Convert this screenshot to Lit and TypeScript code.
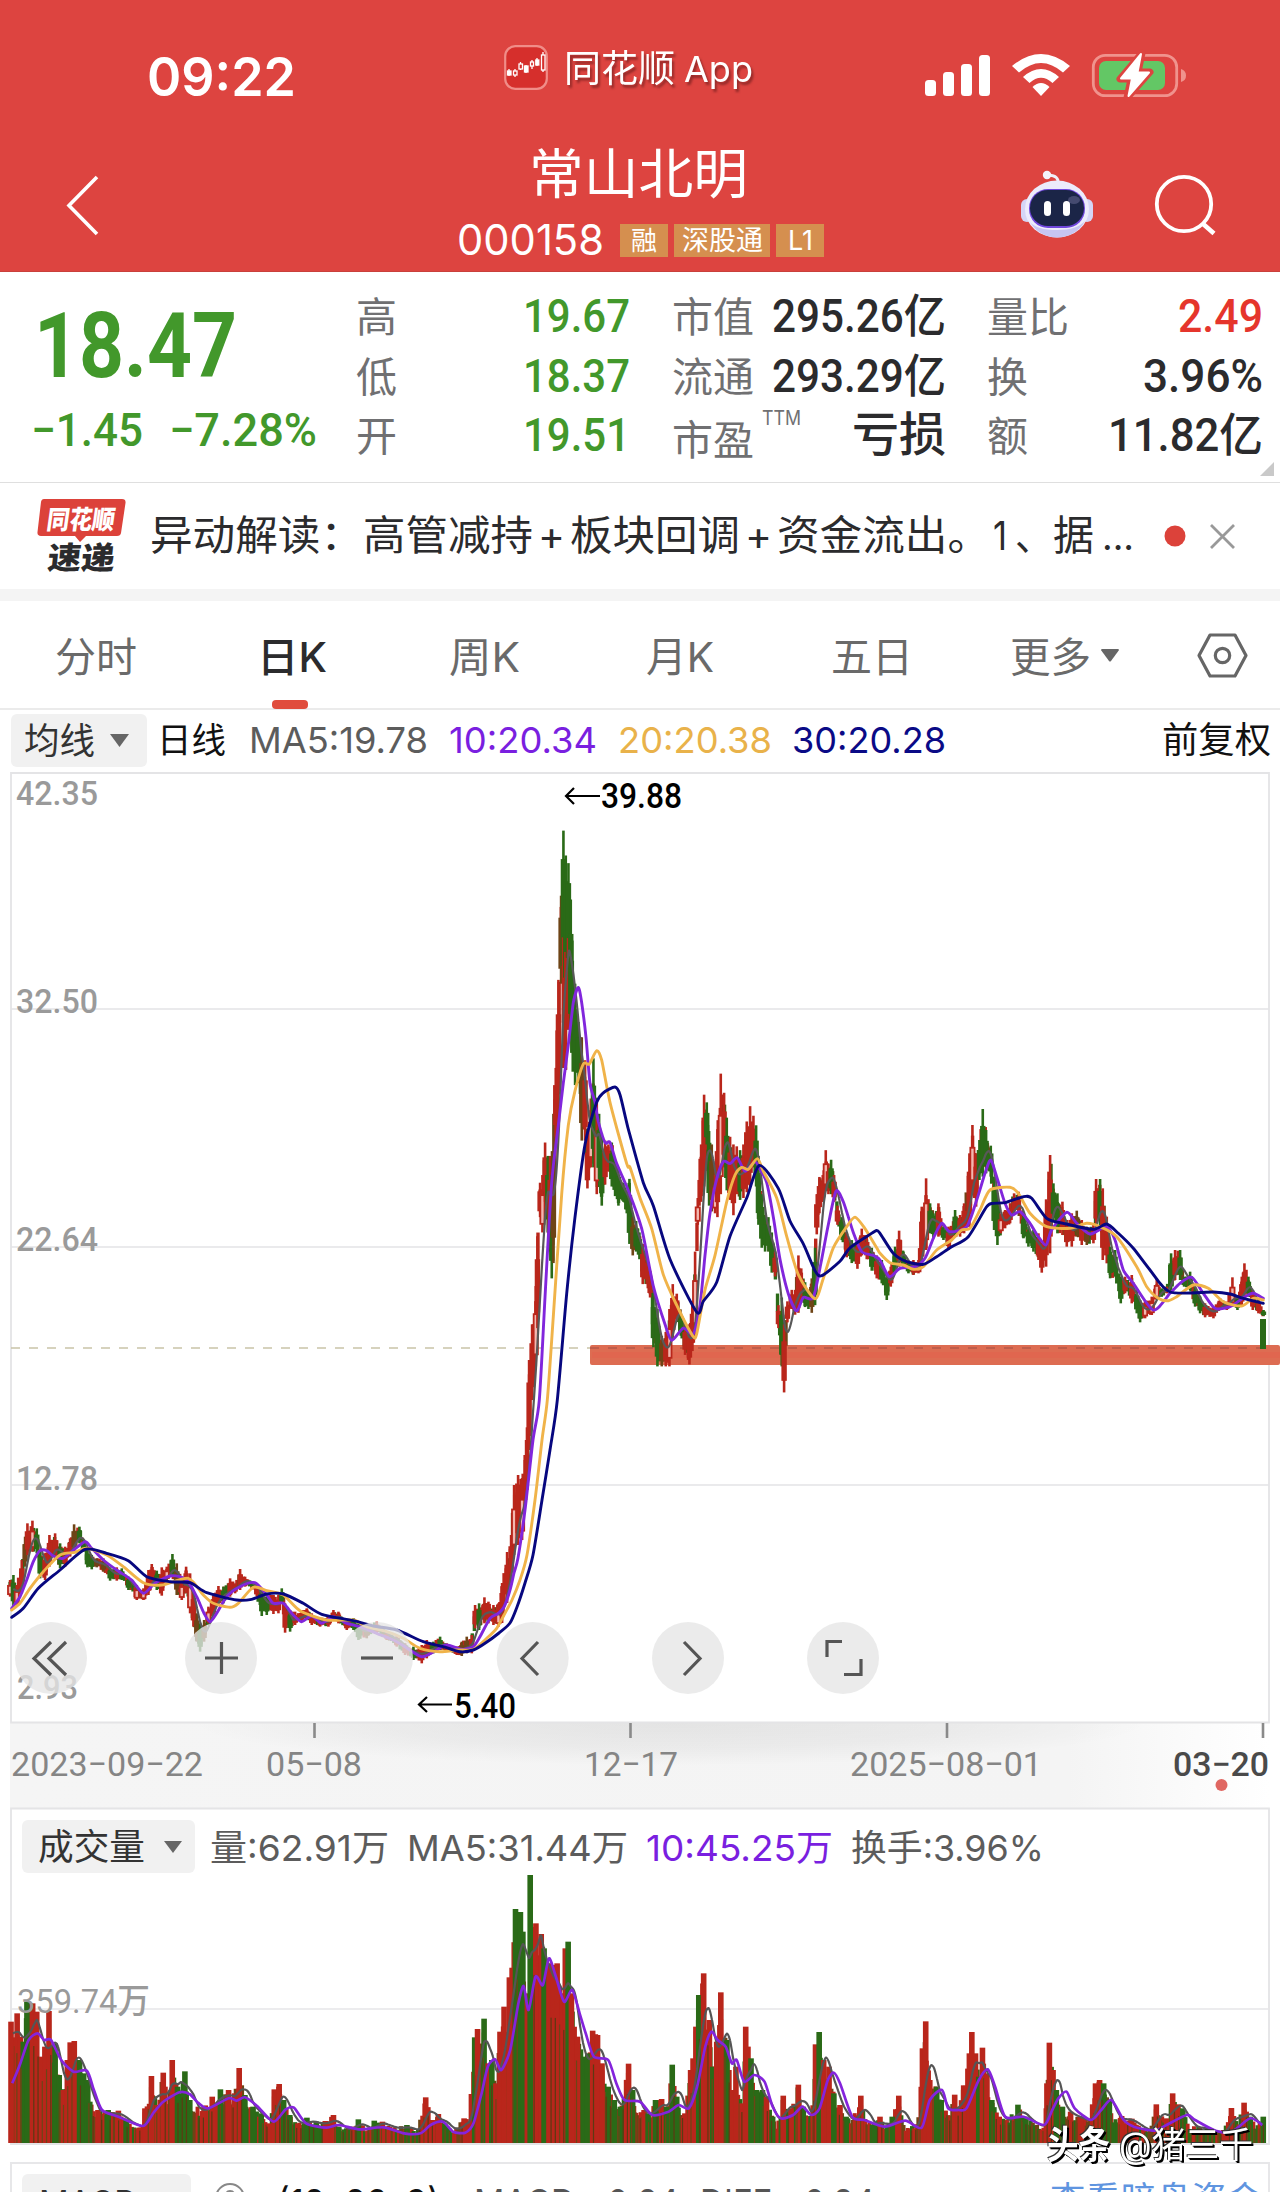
import { LitElement, html, svg, css } from "lit";
import { customElement } from "lit/decorators.js";

type Pt = [number, number];
type Bar = { x: number; top: number; bottom: number };

const RED = "#b9261b";
const GREEN = "#2a6a17";
const BROWN = "#6e4416";

/** Deterministic noise, so that the bars look the same on every render. */
const noise = (i: number): number => {
  const s = Math.sin(i * 127.1 + 11.7) * 43758.5453;
  return s - Math.floor(s);
};

/** "u:v u:v" pairs mapped with an origin and a scale. */
const line = (x0: number, sx: number, y0: number, sy: number, d: string): Pt[] =>
  d.trim().split(/\s+/).map((p) => {
    const [u, v] = p.split(":").map(Number);
    return [x0 + u / sx, y0 + v / sy] as Pt;
  });

const range = (x0: number, sx: number, y0: number, sy: number, d: string): Bar[] =>
  d.trim().split(/\s+/).map((p) => {
    const [u, v] = p.split(":");
    const [a, b] = v.split(",").map(Number);
    return { x: x0 + Number(u) / sx, top: y0 + a / sy, bottom: y0 + b / sy };
  });

const A = [0, 3, 1480, 3] as const;
const B = [500, 3, 800, 2.613] as const;
const C = [880, 3, 1080, 3] as const;
const V1 = [0, 2.45, 1860, 3] as const;
const V2 = [640, 2.45, 1860, 3] as const;

const PRICE: Bar[] = [
  ...range(...A, `30:300,350 40:285,380 50:315,375 65:240,340 75:170,260 82:130,225 97:122,215 110:145,220 120:210,295 135:220,300 148:165,260 165:160,240
  180:190,265 195:200,260 210:175,230 222:133,215 238:140,190 250:180,215 262:210,262 275:225,268 290:235,262 310:235,275 330:262,302
  350:262,302 365:265,300 385:290,330 410:315,360 430:325,360 445:270,345 455:252,320 470:272,330 485:262,347 500:260,300 517:222,290
  530:250,345 545:300,360 558:260,340 570:280,400 580:330,440 590:400,485 600:430,515 612:420,485 625:380,430 640:340,410 655:318,370
  670:320,370 690:295,350 705:310,340 720:267,330 735:290,320 755:305,320 770:310,350 785:325,408 800:340,405 820:345,402 835:345,400
  845:325,370 855:370,458 870:390,455 885:395,435 905:390,425 920:385,420 935:400,435 960:415,440 985:405,440 1000:390,420 1015:395,430
  1040:420,450 1060:415,450 1075:430,480 1100:430,475 1130:425,460 1160:455,480 1190:465,500 1215:490,525 1240:500,540 1265:495,550
  1280:480,535 1300:485,520 1320:470,510 1340:490,510 1370:500,525 1385:485,528 1400:470,520 1415:465,520 1425:375,445 1437:370,450
  1453:352,430 1465:365,430 1480:375,435 1495:370,440`),
  ...range(0, 1, 0, 1, `502:1583,1623 507:1552,1603 511:1535,1580 514:1485,1555 518:1475,1545 522:1478,1540 526:1440,1500 529:1360,1450`),
  ...range(...B, `96:1370,1568 107:1270,1480 112:1140,1380 120:1000,1090 127:980,1130 135:895,1050 143:930,1130 150:930,1180 155:980,1250 160:820,1210
  167:700,880 175:470,830 183:250,480 190:80,700 197:145,705 205:165,600 212:260,620 218:420,710 225:480,745 235:580,740 245:620,890
  255:680,890 262:890,1015 272:780,960 280:675,960 290:790,1030 297:820,990 305:870,1060 315:890,1005 325:900,970 335:895,1010
  345:940,1035 355:960,1060 370:1000,1050 380:1020,1080 388:990,1160 398:1090,1190 408:1100,1180 418:1130,1200 428:1160,1265
  440:1190,1265 450:1230,1300 460:1290,1430 472:1330,1480 485:1400,1480 497:1390,1480 508:1330,1480 518:1265,1410 530:1290,1360
  542:1340,1400 555:1370,1450 568:1370,1475 577:1310,1440 585:1180,1400 593:1040,1110 603:900,1050 612:770,1010 620:790,900
  627:865,1060 635:900,1075 645:980,1080 652:860,1090 662:715,1030 672:765,960 680:830,1020 690:880,1045 700:900,1085 710:905,1030
  720:915,1045 730:900,1040 740:840,1025 750:800,1010 760:825,960 768:850,1010 775:930,1110 785:1030,1170 795:1085,1180 805:1090,1180
  815:1130,1235 825:1180,1245 835:1320,1380 845:1300,1480 852:1370,1548 862:1310,1365 875:1280,1330 885:1280,1345 895:1190,1340
  905:1235,1310 915:1260,1325 925:1280,1330 935:1250,1340 945:1170,1320 950:1030,1135 958:985,1080 968:980,1050 977:915,1020
  985:950,1030 993:940,1030 1002:980,1050 1012:1060,1110 1025:1090,1150 1040:1130,1195 1055:1150,1210 1072:1150,1225 1085:1120,1190
  1100:1140,1200 1115:1170,1230 1130:1190,1250`),
  ...range(...C, `5:540,610 20:580,660 32:560,620 45:500,570 57:452,560 70:515,560 85:545,580 100:540,585 115:540,580 125:380,560 138:295,510
  150:370,460 160:400,475 175:370,470 190:440,480 205:440,510 225:390,470 240:405,470 252:370,460 268:220,440 277:135,330 288:220,380
  298:180,300 308:87,290 318:150,280 332:197,290 342:290,450 352:340,495 362:400,460 375:390,445 390:370,430 402:340,400 415:335,400
  430:400,475 445:440,500 460:450,515 475:460,540 485:490,578 498:358,560 510:225,520 520:310,420 532:340,460 547:365,465 560:420,500
  575:400,500 590:392,470 605:420,495 620:440,495 640:430,490 648:297,440 660:297,440 668:325,540 680:410,550 690:500,595 705:510,590
  722:590,670 735:590,640 755:585,670 770:630,700 780:660,727 795:660,715 815:650,705 830:595,660 845:625,650 860:620,640 873:520,640
  885:510,600 900:510,600 912:590,620 930:575,630 945:620,680 960:650,700 975:670,712 1000:680,715 1020:655,685 1040:665,690
  1057:592,680 1072:650,690 1085:590,680 1093:550,660 1105:590,650 1118:630,690 1135:660,700 1150:690,708`),
];

const MA10: Pt[] = [
  ...line(...A, `35:385 60:350 80:300 100:245 120:212 140:212 160:228 190:235 215:215 255:185 275:205 310:240 350:270 395:300 430:340 465:310 515:287
  560:300 590:350 612:400 630:425 650:400 680:350 720:320 765:308 800:345 820:370 850:370 880:405 905:425 935:408 965:430 1000:410
  1040:430 1080:440 1130:460 1180:480 1215:500 1265:530 1310:510 1340:495 1385:508 1420:500 1440:470 1470:415 1495:400`),
  ...line(0, 1, 0, 1, `504:1607 510:1590 514:1573 518:1558 525:1510 533:1440`),
  ...line(...B, `118:1568 135:1300 155:1000 175:850 190:740 205:640 220:530 235:490 245:530 258:620 270:740 285:790 295:840 315:895 330:895 350:950
  385:1020 425:1120 460:1270 495:1370 515:1412 550:1380 580:1395 600:1320 615:1190 630:1080 650:990 670:945 690:950 712:935 735:970
  765:945 780:965 800:1000 820:1090 840:1200 865:1290 890:1335 910:1300 940:1300 965:1200 985:1110 1008:1022 1030:1050 1060:1130
  1085:1180 1120:1190`),
  ...line(...C, `0:540 28:590 60:565 105:560 135:535 160:475 185:430 210:455 260:440 290:360 315:280 332:240 350:290 375:370 395:405 420:395 450:430
  475:470 498:495 515:450 560:397 590:430 630:462 680:440 705:480 730:570 760:610 820:690 870:640 900:610 935:592 970:640 1005:685
  1050:680 1095:650 1120:640 1150:655`),
];

const MA20: Pt[] = [
  ...line(...A, `35:390 60:370 90:325 130:275 180:225 225:217 260:205 320:225 370:260 430:308 485:315 565:295 610:345 640:370 690:382 715:370 760:322
  800:332 850:345 900:392 980:420 1060:420 1100:440 1160:455 1210:475 1260:505 1320:515 1370:510 1420:508 1460:475 1490:445`),
  ...line(0, 1, 0, 1, `504:1615 512:1600 520:1580 527:1555 535:1500 542:1440`),
  ...line(...B, `142:1568 160:1350 185:1030 205:850 225:760 250:690 268:690 290:655 305:680 330:790 380:950 390:960 420:1040 455:1120 490:1240 530:1320
  578:1400 590:1395 615:1280 645:1190 680:1050 705:980 725:960 745:965 772:937 790:970 830:1040 860:1140 895:1240 945:1303 970:1250
  1000:1170 1040:1115 1065:1090 1095:1120 1130:1170`),
  ...line(...C, `0:520 30:548 70:555 100:568 130:560 170:510 215:480 245:450 270:445 300:390 330:330 390:322 415:340 450:400 500:440 570:445 620:430
  660:440 710:470 770:560 800:620 835:655 865:662 890:650 940:615 985:625 1030:665 1085:678 1120:655 1150:660`),
];

const MA30: Pt[] = [
  ...line(...A, `35:412 70:385 115:325 180:270 255:208 320:220 385:242 440:290 510:305 570:308 620:338 710:360 755:358 800:342 850:342 910:370 965:403
  1060:422 1120:438 1190:450 1270:485 1330:500 1380:515 1420:510 1455:490`),
  ...line(0, 1, 0, 1, `499:1633 510:1623 517:1607 525:1583 533:1555 542:1500 550:1450`),
  ...line(...B, `172:1568 200:1290 225:1090 255:900 290:790 310:765 345:750 360:770 385:860 430:1000 460:1060 510:1200 590:1338 610:1310 650:1260 690:1140
  740:1040 778:955 835:1015 870:1100 910:1160 945:1230 965:1243 1020:1205 1050:1170 1110:1135 1130:1125`),
  ...line(...C, `0:460 40:520 80:545 130:553 170:530 215:500 265:470 320:380 340:370 375:368 430:350 455:355 500:415 550:430 640:448 680:432 715:460 760:505
  810:570 870:636 1000:636 1050:642 1090:655 1150:670`),
];

type Vol = { x: number; y: number; c: string };
const vols = (x0: number, sx: number, y0: number, sy: number, d: string): Vol[] =>
  d.trim().split(/\s+/).map((p) => {
    const m = /^(\d+):(\d+)([rg]?)$/.exec(p)!;
    return { x: x0 + Number(m[1]) / sx, y: y0 + Number(m[2]) / sy, c: m[3] };
  });

const VOLUME: Vol[] = [
  ...vols(...V1, `27:485r 42:460r 50:530r 57:545g 66:425g 80:430r 90:455r 100:590r 110:560r 120:453r 135:550g 145:645g 155:690r 165:600r 172:547r 182:543r
  195:600g 205:640g 215:660g 220:725g 240:750r 265:750g 290:752r 310:780g 330:790 350:800 355:745r 371:648r 385:735r 400:638r 410:700 422:600r
  435:680g 453:634g 465:720g 480:740 500:740r 520:710r 540:688g 560:690r 575:700r 586:624r 600:705g 620:740g 640:760g 660:790r 672:688r 684:672r
  695:720g 710:765g 730:790r 752:773g 775:785g 797:783r 817:765r 830:800g 850:805 878:778g 900:810 917:782g 937:785r 960:800 997:795g 1020:815
  1043:712r 1060:780r 1074:762r 1090:790g 1110:810 1137:775r 1150:770 1155:702r 1163:532g 1170:507r 1186:476g 1196:610r 1205:600g 1215:670r
  1225:515r 1235:440r 1248:352r 1263:147g 1275:156g 1281:215g 1292:400r 1299:45g 1313:190r 1326:222r 1333:265g 1345:310r 1355:315r 1365:310r 1378:400r
  1385:265r 1392:245g 1400:400r 1415:530r 1430:590g 1440:580g 1452:512r 1464:525r 1475:610r 1490:680g 1505:720g 1520:740g 1540:611r 1550:690g 1562:740`),
  ...vols(...V2, `10:750r 20:760g 38:720g 53:717r 65:740g 79:614g 90:710g 110:760r 124:630r 130:595r 137:500r 144:405g 156:340r 170:480r 178:620g 188:545r
  198:397r 213:540g 225:690r 235:620r 250:730r 259:500r 272:595g 285:690g 300:690g 310:710r 325:770g 335:795 351:707r 370:745r 388:674r 400:740g
  420:770 430:553r 439:516g 450:600r 463:620r 475:700g 490:735r 505:770g 520:780 541:707r 555:780 575:790g 588:770r 600:800 618:770g 634:707r
  650:800 680:790 692:565r 700:484r 710:660r 727:680g 738:720g 755:760 771:704r 780:740r 793:676r 807:580r 813:516r 822:580r 830:650g 839:563r
  850:640r 862:720g 880:770r 900:775 926:734g 945:770g 970:790 990:800 997:670r 1003:548r 1012:630r 1020:690g 1035:740g 1055:755r 1080:770r
  1100:780 1109:733r 1116:670r 1126:660r 1136:670g 1150:720g 1160:770 1180:768r 1205:776r 1225:800 1250:810 1265:733r 1290:775r 1305:700r
  1318:733r 1330:745g 1345:795 1380:800 1410:815 1430:810r 1449:744r 1465:785 1480:728r 1495:770g 1510:795 1527:770g`),
];

const VMA10: Pt[] = [
  ...line(...V1, `30:670 50:610 70:540 92:520 108:540 125:540 150:600 180:635 213:632 230:690 250:750 290:770 350:798 375:760 400:725 440:697 465:703
  485:728 510:745 560:715 580:722 600:712 630:738 670:785 700:748 720:743 750:790 800:803 830:795 880:808 940:802 990:820 1030:820 1055:795
  1085:785 1110:815 1140:818 1160:790 1180:700 1195:620 1213:598 1228:630 1250:570 1270:430 1283:378 1295:450 1312:350 1330:375 1345:295
  1362:350 1382:425 1402:390 1420:460 1435:520 1455:590 1490:600 1510:670 1530:720`),
  ...line(...V2, `0:725 30:765 70:755 95:735 120:745 140:680 160:560 175:515 190:540 210:560 225:610 237:600 255:665 280:645 305:665 325:740 345:775
  375:765 398:740 420:765 440:745 460:660 475:638 490:670 520:770 550:780 600:800 650:782 690:803 710:720 740:690 755:745 780:750 800:745
  830:660 852:628 870:680 895:770 940:770 990:795 1010:750 1025:715 1045:695 1065:745 1105:780 1130:750 1155:720 1185:780 1210:800 1260:812
  1290:795 1340:765 1360:780 1410:812 1450:815 1495:775 1525:795`),
];

/** Catmull-Rom path through the points. */
const smooth = (p: Pt[]): string => {
  let d = `M${p[0][0].toFixed(1)} ${p[0][1].toFixed(1)}`;
  for (let i = 0; i < p.length - 1; i++) {
    const a = p[Math.max(0, i - 1)], b = p[i], c = p[i + 1], e = p[Math.min(p.length - 1, i + 2)];
    const k = 8;
    d += `C${(b[0] + (c[0] - a[0]) / k).toFixed(1)} ${(b[1] + (c[1] - a[1]) / k).toFixed(1)} ${(c[0] - (e[0] - b[0]) / k).toFixed(1)} ${(c[1] - (e[1] - b[1]) / k).toFixed(1)} ${c[0].toFixed(1)} ${c[1].toFixed(1)}`;
  }
  return d;
};

const STEP = 2.12;
const BASE = 2143;

const interp = (xs: number[], ys: number[], x: number): number => {
  let i = 0;
  while (i < xs.length - 2 && xs[i + 1] < x) i++;
  const t = Math.min(1, Math.max(0, (x - xs[i]) / (xs[i + 1] - xs[i] || 1)));
  return ys[i] + (ys[i + 1] - ys[i]) * t;
};

const candles = () => {
  const out: unknown[] = [];
  const xs = PRICE.map((p) => p.x);
  const mids = PRICE.map((p) => (p.top + p.bottom) / 2);
  const heights = PRICE.map((p) => p.bottom - p.top);
  const colour = (x: number, i: number) => {
    const trend = interp(xs, mids, x + 2) - interp(xs, mids, x - 4);
    const bias = trend < -2 ? 0.8 : trend > 2 ? 0.36 : 0.6;
    const n = noise(i);
    return n < bias ? RED : n > 0.92 ? BROWN : GREEN;
  };
  let n = 0;
  for (let x = xs[0]; x < xs[xs.length - 1]; x += STEP) {
    n++;
    const m = interp(xs, mids, x);
    const h = Math.max(6, interp(xs, heights, x) * (0.5 + 0.3 * noise(n + 900)));
    const c = colour(x, n);
    const y = m - h / 2 + (noise(n + 300) - 0.5) * h * 0.3;
    out.push(svg`<rect x=${x - 1.6} y=${y} width="3.4" height=${h} fill=${c} />`);
  }
  PRICE.forEach((p, i) => {
    const h = p.bottom - p.top;
    const c = colour(p.x, i + 5000);
    const peak = p.x > 562 && p.x < 570;
    const k = peak ? GREEN : c;
    out.push(svg`<rect x=${p.x - 1.2} y=${p.top} width="2.6" height=${h} fill=${k} />`);
    if (peak) {
      out.push(svg`<rect x=${p.x - 2.6} y=${p.top + h * 0.12} width="5.4" height=${h * 0.45} fill=${k} />`);
      out.push(svg`<rect x=${p.x - 1.6} y=${p.top + h * 0.45} width="3.2" height=${h * 0.55} fill=${RED} />`);
    } else if (c === RED && noise(i + 77) > 0.8) {
      out.push(svg`<rect x=${p.x - 2} y=${p.top + h * 0.35} width="4.2" height=${h * 0.5} fill="#f3b8b0" stroke=${RED} stroke-width="1.8" />`);
    } else {
      out.push(svg`<rect x=${p.x - 2.6} y=${p.top + h * 0.25} width="5.4" height=${h * 0.58} fill=${k} />`);
    }
  });
  return out;
};

const priceMa5 = (): Pt[] => {
  const xs = PRICE.map((p) => p.x);
  const mids = PRICE.map((p) => (p.top + p.bottom) / 2);
  const out: Pt[] = [];
  for (let x = 14; x < 1262; x += 3) {
    let s = 0;
    for (let k = 0; k < 5; k++) s += interp(xs, mids, x - k * 2);
    out.push([x, s / 5]);
  }
  return out;
};

const volumeBars = () => {
  const out: unknown[] = [];
  const xs = VOLUME.map((p) => p.x);
  const ys = VOLUME.map((p) => p.y);
  let n = 0;
  for (let x = 11; x < 1264; x += STEP) {
    n++;
    const h = (BASE - interp(xs, ys, x)) * (0.72 + 0.28 * noise(n + 40));
    const r = noise(n + 7);
    out.push(svg`<rect x=${x - 2} y=${BASE - h} width="4" height=${h} fill=${r < 0.5 ? RED : r < 0.8 ? GREEN : BROWN} />`);
  }
  VOLUME.forEach((p) => {
    if (!p.c) return;
    out.push(svg`<rect x=${p.x - 2.8} y=${p.y} width="5.6" height=${BASE - p.y} fill=${p.c === "r" ? RED : GREEN} />`);
  });
  for (let x = 12, i = 0; x < 1264; x += STEP * 2, i++) {
    if (noise(i + 600) < 0.45) continue;
    const h = (BASE - interp(xs, ys, x)) * 0.7;
    out.push(svg`<rect x=${x} y=${BASE - h} width="1.2" height=${h} fill=${noise(i) > 0.5 ? BROWN : "#5d3a12"} />`);
  }
  return out;
};

const volumeMa5 = (): Pt[] => {
  const xs = VOLUME.map((p) => p.x);
  const ys = VOLUME.map((p) => p.y);
  const out: Pt[] = [];
  for (let x = 13; x < 1262; x += 3) {
    let s = 0;
    for (let k = 0; k < 6; k++) s += interp(xs, ys, x - k * 2.1);
    out.push([x, s / 6 + (BASE - s / 6) * 0.1]);
  }
  return out;
};

/** A line of text fitted to a width; its box ends at the baseline. */
const fit = (text: string, width: number, size: number, cls = "") => {
  const h = Math.round(size * 0.74);
  return html`<svg class="t ${cls}" width=${width} height=${h}><text x="0" y=${h} font-size=${size} textLength=${width} lengthAdjust="spacingAndGlyphs">${text}</text></svg>`;
};

const label = (text: string, x: number, y: number, width: number, size: number, cls: string) =>
  svg`<text class=${cls} x=${x} y=${y} font-size=${size} textLength=${width} lengthAdjust="spacingAndGlyphs">${text}</text>`;

const shared = css`
  :host { display: block; font-family: Inter, "Noto Sans CJK SC", sans-serif; }
  .t { display: block; overflow: visible; flex: none; fill: currentColor; }
  .num { font-family: Roboto, "Noto Sans CJK SC", sans-serif; font-weight: 500; }
  .light { font-weight: 350; }
  .semi { font-weight: 600; }
  .mid { font-weight: 500; }
  .bold { font-weight: 700; }
  svg { display: block; overflow: visible; flex: none; }
`;

@customElement("stock-header")
class StockHeader extends LitElement {
  static styles = [shared, css`
    :host { height: 271px; background: #dd4440; color: #fff; border-bottom: 1px solid #c9403c; }
    .status { height: 96px; display: flex; align-items: flex-end; padding-left: 147px; }
    .badge { margin: 0 16px 6px 208px; }
    .brand { display: flex; align-items: flex-end; gap: 9px; margin: 0 172px 14px 0; filter: drop-shadow(2px 3px 1px rgba(90, 20, 20, .55)); }
    .radio { margin-bottom: -2px; }
    .nav { display: flex; height: 175px; padding-left: 66px; }
    .back { margin: 80px 361px 0 0; }
    .title { width: 364px; display: flex; flex-direction: column; align-items: center; }
    .name { height: 98px; display: flex; align-items: flex-end; margin-right: 7px; }
    .code { display: flex; align-items: flex-end; width: 366px; height: 63px; gap: 6px; }
    .code > .id { margin: 0 10px 2px -2px; }
    .tag { height: 33px; background: #d58f4f; display: flex; align-items: flex-end; justify-content: center; padding-bottom: 7px; box-sizing: border-box; }
    .w48 { width: 48px; }
    .w96 { width: 96px; }
    .robot { margin: 74px 61px 0 197px; }
    .search { margin-top: 78px; }
  `];
  render() {
    return html`
      <div class="status">
        ${fit("09:22", 149, 54, "semi")}
        <svg class="badge" width="44" height="45" viewBox="0 0 44 45" fill="none" stroke="#fff">
          <rect x="1.2" y="1.2" width="41.6" height="42.6" rx="10" fill="#d62f2c" stroke="#f08d88" stroke-width="2.2" />
          <g stroke-width="1.3"><path d="M5 24v7M11 24v8M16.500 17v8M22 20v8M28 15v9M33 13v8M39 7v20" />
            <rect x="3.500" y="26" width="3.500" height="4" fill="#fff" /><rect x="9.500" y="26" width="3.500" height="4" fill="#d62f2c" />
            <rect x="15" y="19" width="3.500" height="5" fill="#d62f2c" /><rect x="20.500" y="21" width="3.500" height="6" fill="#fff" />
            <rect x="26.500" y="17" width="3" height="4" fill="#d62f2c" /><rect x="31.800" y="15" width="3" height="5" fill="#fff" />
            <rect x="37.500" y="10" width="3.500" height="15" fill="#d62f2c" /></g>
        </svg>
        <div class="brand">${fit("同花顺", 111, 37)}${fit("App", 69, 36)}</div>
        <svg class="radio" width="262" height="46" viewBox="922 52 262 46" fill="#fff">
          <rect x="922" y="80" width="11" height="16" rx="3.500" /><rect x="940" y="72" width="11" height="24" rx="3.500" />
          <rect x="958" y="64" width="11" height="32" rx="3.500" /><rect x="976" y="55" width="11" height="41" rx="3.500" />
          <path d="M1009 66Q1038 42 1067 66L1060 72.500Q1038 53.500 1016 72.500Z" />
          <path d="M1020 77Q1038 61 1056 77L1049.500 83Q1038 72.500 1026.500 83Z" />
          <path d="M1029.500 87Q1038 79 1046.500 87L1038 96Z" />
          <rect x="1090.300" y="55.300" width="83.400" height="40.400" rx="12" fill="none" stroke="#f0938d" stroke-width="2.800" />
          <rect x="1096" y="61" width="66" height="29" rx="7" fill="#63c765" />
          <path d="M1178 69q5 1.500 5 6.500t-5 6.500z" fill="#f0938d" />
          <path d="M1139 53L1117 79H1128L1124 98L1147 72H1135Z" stroke="#dd4440" stroke-width="7" stroke-linejoin="round" />
          <path d="M1138 54L1118 78.500H1129L1125.500 96L1146 72.500H1134.500Z" stroke="#fff" stroke-width="2" stroke-linejoin="round" />
        </svg>
      </div>
      <div class="nav">
        <svg class="back" width="33" height="60" viewBox="0 0 33 60" fill="none" stroke="#fff" stroke-width="3.600"><path d="M31 1L3 29.500L31 58" /></svg>
        <div class="title">
          <div class="name">${fit("常山北明", 219, 54)}</div>
          <div class="code">
            <div class="id">${fit("000158", 147, 42)}</div>
            <div class="tag w48">${fit("融", 26, 26)}</div>
            <div class="tag w96">${fit("深股通", 81, 27)}</div>
            <div class="tag w48">${fit("L1", 25, 27)}</div>
          </div>
        </div>
        <svg class="robot" width="72" height="68" viewBox="0 0 72 68">
          <path d="M37 13q1-7-9-8" fill="none" stroke="#efeef8" stroke-width="3" /><circle cx="26" cy="5" r="4.200" fill="#f4f3fb" />
          <rect x="0" y="29" width="12" height="23" rx="6" fill="#d5d5f6" /><rect x="60" y="29" width="12" height="23" rx="6" fill="#d5d5f6" />
          <ellipse cx="36" cy="39" rx="32" ry="28.500" fill="#ecebfb" />
          <path d="M9 52Q18 67 36 67.500Q55 67 64 51Q56 60 36 60Q16 60 9 52" fill="#c7c5f2" />
          <rect x="8" y="19" width="56" height="39" rx="19" fill="#7047dc" />
          <rect x="9" y="20" width="54" height="36" rx="18" fill="#1b2547" />
          <ellipse cx="53" cy="30" rx="6" ry="4" fill="#454a70" />
          <rect x="23" y="31" width="7" height="15" rx="3.500" fill="#fff" /><rect x="42" y="31" width="7" height="15" rx="3.500" fill="#fff" />
        </svg>
        <svg class="search" width="62" height="62" viewBox="0 0 62 62" fill="none" stroke="#fff" stroke-width="3.800"><circle cx="30" cy="30" r="27.200" /><path d="M48 49L60 59.500" stroke-width="4.500" /></svg>
      </div>`;
  }
}

@customElement("stock-quote")
class StockQuote extends LitElement {
  static styles = [shared, css`
    :host { display: flex; height: 210px; background: #fff; border-bottom: 1px solid #dfdfdf; position: relative; color: #2b2b2d; }
    .main { width: 325px; padding-left: 31px; color: #42982b; }
    .price { height: 105px; display: flex; align-items: flex-end; padding-left: 3px; }
    .delta { height: 69px; display: flex; align-items: flex-end; gap: 26px; }
    .col { width: 274px; margin-right: 42px; }
    .col.last { width: 276px; margin: 0 0 0 -1px; }
    .row { height: 60px; display: flex; align-items: flex-end; justify-content: space-between; }
    .row:last-child { height: 59px; }
    .k { color: #707072; display: flex; align-items: flex-end; }
    .low { margin-bottom: -4px; }
    .sup { margin: 0 0 30px 8px; }
    .green { color: #42982b; }
    .red { color: #e5352c; }
    .corner { position: absolute; right: 6px; bottom: 6px; width: 14px; height: 14px; background: #c9c9c9; clip-path: polygon(100% 0, 100% 100%, 0 100%); }
  `];
  render() {
    return html`
      <div class="main">
        <div class="price">${fit("18.47", 203, 91, "num bold")}</div>
        <div class="delta">${fit("−1.45", 112, 46, "num")}${fit("−7.28%", 148, 46, "num")}</div>
      </div>
      <div class="col">
        <div class="row"><div class="k">${fit("高", 41, 41)}</div><div class="green">${fit("19.67", 107, 47, "num")}</div></div>
        <div class="row"><div class="k">${fit("低", 41, 41)}</div><div class="green">${fit("18.37", 107, 47, "num")}</div></div>
        <div class="row"><div class="k">${fit("开", 41, 41)}</div><div class="green">${fit("19.51", 107, 47, "num")}</div></div>
      </div>
      <div class="col">
        <div class="row"><div class="k">${fit("市值", 82, 41)}</div>${fit("295.26亿", 174, 46, "num")}</div>
        <div class="row"><div class="k">${fit("流通", 82, 41)}</div>${fit("293.29亿", 174, 46, "num")}</div>
        <div class="row"><div class="k low">${fit("市盈", 82, 41)}<span class="sup">${fit("TTM", 39, 20)}</span></div>${fit("亏损", 94, 47, "num")}</div>
      </div>
      <div class="col last">
        <div class="row"><div class="k">${fit("量比", 82, 41)}</div><div class="red">${fit("2.49", 85, 47, "num")}</div></div>
        <div class="row"><div class="k">${fit("换", 41, 41)}</div>${fit("3.96%", 120, 47, "num")}</div>
        <div class="row"><div class="k">${fit("额", 41, 41)}</div>${fit("11.82亿", 155, 46, "num")}</div>
      </div>
      <i class="corner"></i>`;
  }
}

@customElement("news-strip")
class NewsStrip extends LitElement {
  static styles = [shared, css`
    :host { display: flex; align-items: center; height: 106px; background: #fff; border-bottom: 12px solid #f4f4f4; color: #2b2b2d; padding-left: 37px; }
    .line { display: flex; align-items: flex-end; margin: 0 30px 2px 24px; }
    .plus { width: 37px; display: flex; justify-content: center; }
    .one { margin-left: 3px; margin-right: 8px; }
    .comma { width: 38px; }
    .dots { margin-left: 8px; }
    .dot { margin-right: 25px; }
    .logo-top { fill: #fff; font-weight: 900; }
    .logo-bottom { fill: #2b2b2d; font-weight: 900; }
  `];
  render() {
    return html`
      <svg width="89" height="74" viewBox="0 0 89 74">
        <path d="M7 0H85q4 0 3.500 4L84 34q-.5 3-4 3H49l-6 6-5-6H4q-4 0-3.500-4L4 3q.5-3 3-3z" fill="#dc423a" />
        <g transform="skewX(-8)">${label("同花顺", 13, 30, 68, 26, "logo-top")}</g>
        <g transform="skewX(-6)">${label("速递", 17, 70, 67, 31, "logo-bottom")}</g>
      </svg>
      <div class="line">
        ${fit("异动解读：", 213, 41)}${fit("高管减持", 170, 41)}
        <span class="plus">${fit("+", 27, 40)}</span>${fit("板块回调", 170, 41)}
        <span class="plus">${fit("+", 27, 40)}</span>${fit("资金流出。", 213, 41)}
        <span class="one">${fit("1", 14, 40)}</span><span class="comma">${fit("、", 38, 40)}</span>${fit("据", 41, 41)}
        <span class="dots">${fit("...", 32, 38)}</span>
      </div>
      <svg class="dot" width="22" height="22"><circle cx="11" cy="11" r="10.500" fill="#dc423a" /></svg>
      <svg width="23" height="23" fill="none" stroke="#999" stroke-width="2.800"><path d="M0 0L23 23M23 0L0 23" /></svg>`;
  }
}

@customElement("period-tabs")
class PeriodTabs extends LitElement {
  static styles = [shared, css`
    :host { display: flex; height: 107px; background: #fff; border-bottom: 2px solid #ebebeb; color: #6a6a6a; padding-left: 55px; position: relative; }
    .tab { height: 71px; display: flex; align-items: flex-end; }
    .tab.on { color: #2b2b2d; position: relative; }
    .tab.on::after { content: ""; position: absolute; left: 15px; top: 99px; width: 36px; height: 9px; border-radius: 4px; background: #e04c3c; }
    .g1 { margin-right: 120px; } .g2 { margin-right: 122px; } .g3 { margin-right: 126px; }
    .g4 { margin-right: 117px; } .g5 { margin-right: 97px; } .g6 { margin-right: 10px; }
    .caret { margin: 48px 78px 0 0; }
    .gear { margin-top: 32px; }
  `];
  render() {
    return html`
      <div class="tab g1">${fit("分时", 82, 41)}</div>
      <div class="tab on g2">${fit("日K", 70, 41, "mid")}</div>
      <div class="tab g3">${fit("周K", 71, 41)}</div>
      <div class="tab g4">${fit("月K", 68, 41)}</div>
      <div class="tab g5">${fit("五日", 82, 41)}</div>
      <div class="tab g6">${fit("更多", 81, 41)}</div>
      <svg class="caret" width="18" height="13" fill="#666"><path d="M1 0H17q1.500 0 .7 1.500L10 12q-1 1-2 0L.3 1.500Q-.5 0 1 0z" /></svg>
      <svg class="gear" width="51" height="45" viewBox="0 0 51 45" fill="none" stroke="#666" stroke-width="3.200" stroke-linejoin="round"><path d="M13 2H38L49 22.500L38 43H13L2 22.500Z" /><circle cx="25.500" cy="22.500" r="7.200" /></svg>`;
  }
}

@customElement("ma-legend")
class MaLegend extends LitElement {
  static styles = [shared, css`
    :host { display: flex; height: 62px; background: #fff; padding-left: 11px; }
    .pick { width: 136px; height: 53px; margin: 4px 10px 0 0; border-radius: 6px; background: #f1f1f1; color: #333; display: flex; align-items: center; gap: 15px; padding-left: 13px; box-sizing: border-box; }
    .row { height: 43px; display: flex; align-items: flex-end; }
    .line { color: #111; margin-right: 23px; }
    .m5 { color: #5c5c5c; margin-right: 21px; } .m10 { color: #7a1fe0; margin-right: 21px; }
    .m20 { color: #e9b24a; margin-right: 20px; } .m30 { color: #0a0a86; margin-right: 216px; } .adj { color: #111; }
  `];
  render() {
    return html`
      <div class="pick">${fit("均线", 71, 36)}<svg width="19" height="13" fill="#666"><path d="M0 0H19L9.500 13Z" /></svg></div>
      <div class="row">
        <div class="line">${fit("日线", 69, 35)}</div>
        <div class="m5">${fit("MA5:19.78", 179, 36)}</div>
        <div class="m10">${fit("10:20.34", 148, 36)}</div>
        <div class="m20">${fit("20:20.38", 154, 36)}</div>
        <div class="m30">${fit("30:20.28", 154, 36)}</div>
        <div class="adj">${fit("前复权", 109, 36)}</div>
      </div>`;
  }
}

@customElement("price-chart")
class PriceChart extends LitElement {
  static styles = [shared, css`
    :host { background: #fff; height: 1036px; }
    .axis { fill: #9a9a9a; font-family: Roboto, sans-serif; font-weight: 500; }
    .mark { fill: #000; font-family: Roboto, sans-serif; font-weight: 500; }
    .date { fill: #858585; font-family: Roboto, sans-serif; font-weight: 450; }
    .today { fill: #4a4a4a; font-family: Roboto, sans-serif; font-weight: 500; }
  `];
  render() {
    const knob = (x: number) => svg`<circle cx=${x} cy="1658" r="36" fill="#e6e6e6" fill-opacity=".78" />`;
    return html`
      <svg width="1280" height="1036" viewBox="0 772 1280 1036">
        <defs>
          <linearGradient id="fade" x1="0" x2="1" y1="0" y2="0"><stop offset="0" stop-color="#f5f5f5" /><stop offset=".84" stop-color="#f4f4f4" /><stop offset="1" stop-color="#fff" /></linearGradient>
          <radialGradient id="shade" cx=".5" cy="0" r=".5" gradientTransform="translate(0 0)"><stop offset="0" stop-color="#000" stop-opacity=".07" /><stop offset=".6" stop-color="#000" stop-opacity=".04" /><stop offset="1" stop-color="#000" stop-opacity="0" /></radialGradient>
        </defs>
        <rect x="10" y="1723" width="1260" height="85" fill="url(#fade)" />
        <rect x="190" y="1723" width="960" height="85" fill="url(#shade)" />
        <g stroke="#e4e4e6" stroke-width="1.800" fill="none">
          <path d="M11 773H1269V1722.500H11Z" /><path d="M11 1009H1269M11 1247H1269M11 1485H1269" stroke-width="1.300" />
        </g>
        <rect x="590" y="1345" width="690" height="20" rx="2" fill="#dd6c52" />
        <rect x="592" y="1352" width="688" height="6" fill="#e2634f" opacity=".6" />
        <path d="M11 1348H590" stroke="#c9c3a8" stroke-width="1.600" stroke-dasharray="9 9" />
        <path d="M590 1348H1269" stroke="#b5584a" stroke-width="1.600" stroke-dasharray="9 9" />
        ${candles()}
        <rect x="1260" y="1319" width="6" height="30" fill=${GREEN} />
        <g fill="none" stroke-linejoin="round" stroke-linecap="round">
          <path d=${smooth(priceMa5())} stroke="#585858" stroke-width="2.200" />
          <path d=${smooth(MA10)} stroke="#8126dc" stroke-width="2.900" />
          <path d=${smooth(MA20)} stroke="#f0b349" stroke-width="2.900" />
          <path d=${smooth(MA30)} stroke="#07077f" stroke-width="2.900" />
        </g>
        ${label("42.35", 16, 805, 82, 34, "axis")}${label("32.50", 16, 1013, 82, 34, "axis")}${label("22.64", 16, 1251, 82, 34, "axis")}
        ${label("12.78", 16, 1490, 82, 34, "axis")}${label("2.93", 17, 1699, 61, 34, "axis")}
        <g fill="none" stroke="#000" stroke-width="2.200"><path d="M600 796H566M574 788L566 796L574 804" /><path d="M452 1704.500H419M427 1697L419 1704.500L427 1712" /></g>
        ${label("39.88", 601, 808, 81, 35, "mark")}${label("5.40", 454, 1718, 62, 35, "mark")}
        ${[51, 221, 377, 532.7, 688, 843].map(knob)}
        <g fill="none" stroke="#555" stroke-width="3.200">
          <path d="M51 1642L34 1658.500L51 1675M66 1642L49 1658.500L66 1675" />
          <path d="M205 1658H238M221.500 1642V1674" /><path d="M361 1658H393" />
          <path d="M538 1642L522 1658.500L538 1675" /><path d="M684 1642L700 1658.500L684 1675" />
          <path d="M827 1657V1641.500H842M844 1674.500H861V1659" />
        </g>
        <path d="M314.500 1723V1738M630.500 1723V1738M947 1723V1738M1263 1723V1738" stroke="#8a8a8a" stroke-width="2.600" />
        ${label("2023−09−22", 11, 1776, 192, 34, "date")}${label("05−08", 266, 1776, 96, 34, "date")}${label("12−17", 584, 1776, 94, 34, "date")}
        ${label("2025−08−01", 850, 1776, 192, 34, "date")}${label("03−20", 1173, 1776, 96, 34, "today")}
        <circle cx="1221.500" cy="1785" r="6" fill="#e06762" />
      </svg>`;
  }
}

@customElement("volume-panel")
class VolumePanel extends LitElement {
  static styles = [shared, css`
    :host { background: #fff; height: 354px; position: relative; }
    .head { display: flex; padding-left: 22px; height: 66px; }
    .pick { width: 173px; height: 53px; margin: 12px 15px 0 0; border-radius: 6px; background: #f1f1f1; color: #333; display: flex; align-items: center; gap: 19px; padding-left: 16px; box-sizing: border-box; }
    .row { height: 53px; display: flex; align-items: flex-end; color: #5c5c5c; gap: 18px; }
    .m10 { color: #7a1fe0; }
    .plot { position: absolute; left: 0; top: 0; }
    .axis { fill: #9a9a9a; font-family: Roboto, "Noto Sans CJK SC", sans-serif; font-weight: 450; }
    .mark { position: absolute; left: 1047px; top: 316px; display: flex; align-items: flex-end; gap: 9px; height: 38px; box-sizing: border-box; padding-bottom: 4px; color: #fff; filter: drop-shadow(2px 2px 0 #000) drop-shadow(-.5px -.5px 0 #333); }
  `];
  render() {
    return html`
      <svg class="plot" width="1280" height="354" viewBox="0 1808 1280 354">
        <path d="M11 1808.500H1269V2144H11Z" fill="none" stroke="#e4e4e6" stroke-width="1.800" /><path d="M11 2009H1269" stroke="#e6e6e8" stroke-width="1.300" />
        ${volumeBars()}
        <path d=${smooth(volumeMa5())} fill="none" stroke="#555" stroke-width="2.200" />
        <path d=${smooth(VMA10)} fill="none" stroke="#8424dc" stroke-width="2.700" />
        ${label("359.74万", 17, 2013, 133, 34, "axis")}
      </svg>
      <div class="head">
        <div class="pick">${fit("成交量", 107, 36)}<svg width="18" height="12" fill="#666"><path d="M0 0H18L9 12Z" /></svg></div>
        <div class="row">
          ${fit("量:62.91万", 179, 36)}${fit("MA5:31.44万", 221, 36)}
          <div class="m10">${fit("10:45.25万", 187, 36)}</div>${fit("换手:3.96%", 193, 36)}
        </div>
      </div>
      <div class="mark">${fit("头条", 63, 38, "bold")}${fit("@猪三千", 134, 36)}</div>`;
  }
}

@customElement("macd-head")
class MacdHead extends LitElement {
  static styles = [shared, css`
    :host { display: flex; height: 30px; background: #fff; border: 2px solid #e7e7e9; border-bottom: 0; margin: 0 10px; padding-left: 10px; box-sizing: border-box; overflow: hidden; }
    .pick { width: 169px; height: 53px; flex: none; margin-top: 10px; border-radius: 6px; background: #f1f1f1; color: #333; padding: 15px 0 0 17px; box-sizing: border-box; }
    .help { margin: 19px 32px 0 24px; }
    .args { color: #111; margin: 24px 34px 0 0; }
    .val { color: #555; margin: 24px 21px 0 0; }
    .link { color: #5f95e0; margin: 22px 0 0 154px; }
  `];
  render() {
    return html`
      <div class="pick">${fit("MACD", 99, 36)}</div>
      <svg class="help" width="30" height="30" viewBox="0 0 30 30" fill="none" stroke="#888" stroke-width="2"><circle cx="15" cy="15" r="14" /><path d="M11 13q0-5 4-5t4 4q0 2-4 5v2" /></svg>
      <div class="args">${fit("(12, 26, 9)", 163, 36)}</div>
      <div class="val">${fit("MACD:−0.24", 205, 36)}</div>
      <div class="val">${fit("DIFF:−0.84", 175, 36)}</div>
      <div class="link">${fit("查看暗盘资金", 212, 35)}</div>`;
  }
}

@customElement("app-root")
class AppRoot extends LitElement {
  static styles = css`
    :host { display: block; width: 1280px; height: 2192px; overflow: hidden; background: #fff; }
  `;
  render() {
    return html`
      <stock-header></stock-header>
      <stock-quote></stock-quote>
      <news-strip></news-strip>
      <period-tabs></period-tabs>
      <ma-legend></ma-legend>
      <price-chart></price-chart>
      <volume-panel></volume-panel>
      <macd-head></macd-head>`;
  }
}
